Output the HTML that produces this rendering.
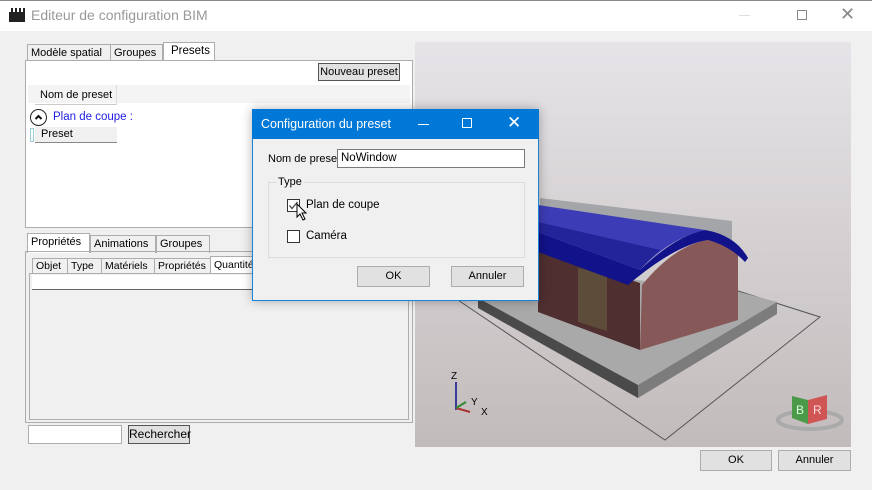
<!DOCTYPE html>
<html><head><meta charset="utf-8"><style>
*{box-sizing:border-box;margin:0;padding:0}
body{width:872px;height:490px;background:#f0f0f0;font-family:"Liberation Sans",sans-serif;font-size:11px;color:#000;position:relative;overflow:hidden}
.a{position:absolute;white-space:nowrap}
.btn{position:absolute;background:#e1e1e1;border:1px solid #adadad;text-align:center;line-height:19px;white-space:nowrap}
.tab{position:absolute;background:#f0f0f0;border:1px solid #adadad;border-bottom:none;padding:0 3px;line-height:17px;height:18px;white-space:nowrap}
</style></head><body>
<div class="a" style="left:0;top:0;width:872px;height:31px;background:#fff;border-top:1px solid #888"></div>
<div class="a" style="left:9px;top:8px;width:16px;height:14px;background:#222"></div>
<div class="a" style="left:9px;top:8px;width:16px;height:4px;background:repeating-linear-gradient(90deg,#fff 0 2px,#222 2px 4px)"></div>
<div class="a" style="left:31px;top:7px;font-size:14px;color:#999">Editeur de configuration BIM</div>
<div class="a" style="left:739px;top:15px;width:11px;height:1px;background:#ddd"></div>
<div class="a" style="left:797px;top:10px;width:10px;height:10px;border:1px solid #888"></div>
<div class="a" style="left:840px;top:4px;font-size:18px;color:#888">✕</div>

<!-- top tabs -->
<div class="tab" style="left:27px;top:44px;width:84px">Modèle spatial</div>
<div class="tab" style="left:110px;top:44px;width:53px">Groupes</div>
<div class="tab" style="left:163px;top:42px;height:20px;width:52px;background:#fff;padding-left:7px;font-size:11.5px">Presets</div>
<div class="a" style="left:25px;top:60px;width:388px;height:168px;background:#fff;border:1px solid #adadad"></div>
<div class="btn" style="left:318px;top:63px;width:82px;height:18px;line-height:16px;border:1px solid #555">Nouveau preset</div>
<div class="a" style="left:28px;top:85px;width:382px;height:18px;background:#f4f4f4"></div>
<div class="a" style="left:35px;top:85px;width:82px;height:20px;border-right:1px solid #ddd;border-bottom:1px solid #ccc;line-height:20px;padding-left:5px">Nom de preset</div>
<div class="a" style="left:30px;top:109px;width:17px;height:17px;border:1.5px solid #222;border-radius:50%;background:#fff"></div>
<svg class="a" style="left:30px;top:109px" width="17" height="17"><polyline points="5.5,10 8.5,7 11.5,10" fill="none" stroke="#111" stroke-width="2"/></svg>
<div class="a" style="left:53px;top:111px;color:#2020e0;font-size:11.5px">Plan de coupe :</div>
<div class="a" style="left:30px;top:128px;width:4px;height:14px;border:1px solid #9cd"></div>
<div class="a" style="left:35px;top:127px;width:82px;height:16px;border-bottom:1px solid #888;padding-left:6px;line-height:15px;background:#f0f0f0">Preset</div>

<!-- bottom tabs -->
<div class="tab" style="left:27px;top:233px;height:20px;width:63px;background:#fff">Propriétés</div>
<div class="tab" style="left:90px;top:235px;width:66px">Animations</div>
<div class="tab" style="left:156px;top:235px;width:54px">Groupes</div>
<div class="a" style="left:25px;top:251px;width:388px;height:172px;border:1px solid #adadad"></div>
<div class="tab" style="left:32px;top:258px;height:16px;line-height:15px;width:36px;font-size:10.5px">Objet</div>
<div class="tab" style="left:67px;top:258px;height:16px;line-height:15px;width:35px;font-size:10.5px">Type</div>
<div class="tab" style="left:101px;top:258px;height:16px;line-height:15px;width:54px;font-size:10.5px">Matériels</div>
<div class="tab" style="left:154px;top:258px;height:16px;line-height:15px;width:57px;font-size:10.5px">Propriétés</div>
<div class="tab" style="left:210px;top:256px;height:18px;background:#fff;font-size:10.5px;width:50px">Quantités</div>
<div class="a" style="left:29px;top:273px;width:380px;height:147px;border:1px solid #adadad"></div>
<div class="a" style="left:32px;top:275px;width:376px;height:15px;background:#fff;border-bottom:1px solid #666"></div>
<div class="a" style="left:28px;top:425px;width:94px;height:19px;background:#fff;border:1px solid #adadad"></div>
<div class="btn" style="left:128px;top:425px;width:62px;height:19px;line-height:17px;border:1px solid #555;font-size:12px">Rechercher</div>

<!-- 3D view -->
<div class="a" style="left:415px;top:42px;width:436px;height:405px;background:linear-gradient(#e6e4e8,#c2bbbb)"></div>
<svg class="a" style="left:0;top:0" width="872" height="490">
<polyline points="455,298 665,440 820,317 735,290" fill="none" stroke="#555" stroke-width="1"/>
<polygon points="478,290 540,270 732,290 777,302 638,385 478,298" fill="#a9a9a9"/>
<polygon points="638,385 777,302 777,314 638,398" fill="#7c7c7c"/>
<polygon points="478,298 638,385 638,398 478,308" fill="#4a4a4a"/>
<polygon points="540,198 732,221 732,245 540,222" fill="#a3a5a9"/>
<polygon points="538,250 640,283 640,350 538,312" fill="#4f2f2f"/>
<polygon points="578,268 607,272 607,331 578,322" fill="#5d4c3a"/>
<path d="M642,285 Q675,245 708,240 Q730,246 738,252 L738,320 L640,350 Z" fill="#875858"/>
<path d="M538,232 L640,270 Q675,236 705,230 Q735,235 748,258 L745,262 Q730,246 708,240 Q675,245 628,285 L538,252 Z" fill="#12128a"/>
<path d="M538,205 L705,230 Q670,238 640,270 L538,232 Z" fill="#3c3cb6"/>
<path d="M538,222 L660,250 Q650,258 640,270 L538,232 Z" fill="#24249a"/>
<line x1="456" y1="410" x2="456" y2="382" stroke="#3a3a9a" stroke-width="2"/>
<line x1="456" y1="408" x2="470" y2="412" stroke="#a33" stroke-width="2"/>
<line x1="456" y1="408" x2="466" y2="402" stroke="#383" stroke-width="2"/>
<text x="451" y="379" font-family="Liberation Sans" font-size="10">Z</text>
<text x="471" y="405" font-family="Liberation Sans" font-size="10">Y</text>
<text x="481" y="415" font-family="Liberation Sans" font-size="10">X</text>
<ellipse cx="810" cy="420" rx="32" ry="9" fill="none" stroke="#aaa" stroke-width="4"/>
<polygon points="792,396 808,400 808,424 792,418" fill="#4a9a4a"/>
<polygon points="808,400 827,395 827,419 808,424" fill="#d05555"/>
<text x="796" y="414" font-family="Liberation Sans" font-size="12" fill="#dfd">B</text>
<text x="813" y="414" font-family="Liberation Sans" font-size="12" fill="#fdd">R</text>
</svg>
<div class="btn" style="left:700px;top:450px;width:72px;height:21px">OK</div>
<div class="btn" style="left:778px;top:450px;width:73px;height:21px">Annuler</div>

<!-- dialog -->
<div class="a" style="left:252px;top:109px;width:287px;height:192px;background:#f0f0f0;border:1px solid #1883d7;box-shadow:0 0 10px rgba(0,0,0,.3)"></div>
<div class="a" style="left:252px;top:109px;width:287px;height:30px;background:#0078d7"></div>
<div class="a" style="left:261px;top:117px;color:#fff;font-size:12.5px">Configuration du preset</div>
<div class="a" style="left:418px;top:124px;width:11px;height:1px;background:#fff"></div>
<div class="a" style="left:462px;top:118px;width:10px;height:10px;border:1px solid #fff"></div>
<div class="a" style="left:507px;top:113px;color:#fff;font-size:17px">✕</div>
<div class="a" style="left:268px;top:153px">Nom de preset</div>
<div class="a" style="left:337px;top:149px;width:188px;height:19px;background:#fff;border:1px solid #7a7a7a;padding-left:3px;line-height:17px;font-size:11.5px">NoWindow</div>
<div class="a" style="left:268px;top:182px;width:257px;height:76px;border:1px solid #dcdcdc"></div>
<div class="a" style="left:276px;top:176px;background:#f0f0f0;padding:0 2px">Type</div>
<div class="a" style="left:287px;top:199px;width:13px;height:13px;border:1px solid #333;background:#fff"></div>
<svg class="a" style="left:287px;top:199px" width="13" height="13"><polyline points="2.5,6.5 5,9.5 10.5,3" fill="none" stroke="#444" stroke-width="1.3"/></svg>
<svg class="a" style="left:296px;top:203px" width="14" height="20"><polygon points="1,1 1,14 4,11 7,17 9,16 6,10 10,10" fill="#fff" stroke="#000" stroke-width="1"/></svg>
<div class="a" style="left:306px;top:199px;font-size:11.5px">Plan de coupe</div>
<div class="a" style="left:287px;top:230px;width:13px;height:13px;border:1px solid #333;background:#fff"></div>
<div class="a" style="left:306px;top:230px;font-size:11.5px">Caméra</div>
<div class="btn" style="left:357px;top:266px;width:73px;height:21px">OK</div>
<div class="btn" style="left:451px;top:266px;width:73px;height:21px">Annuler</div>
</body></html>
